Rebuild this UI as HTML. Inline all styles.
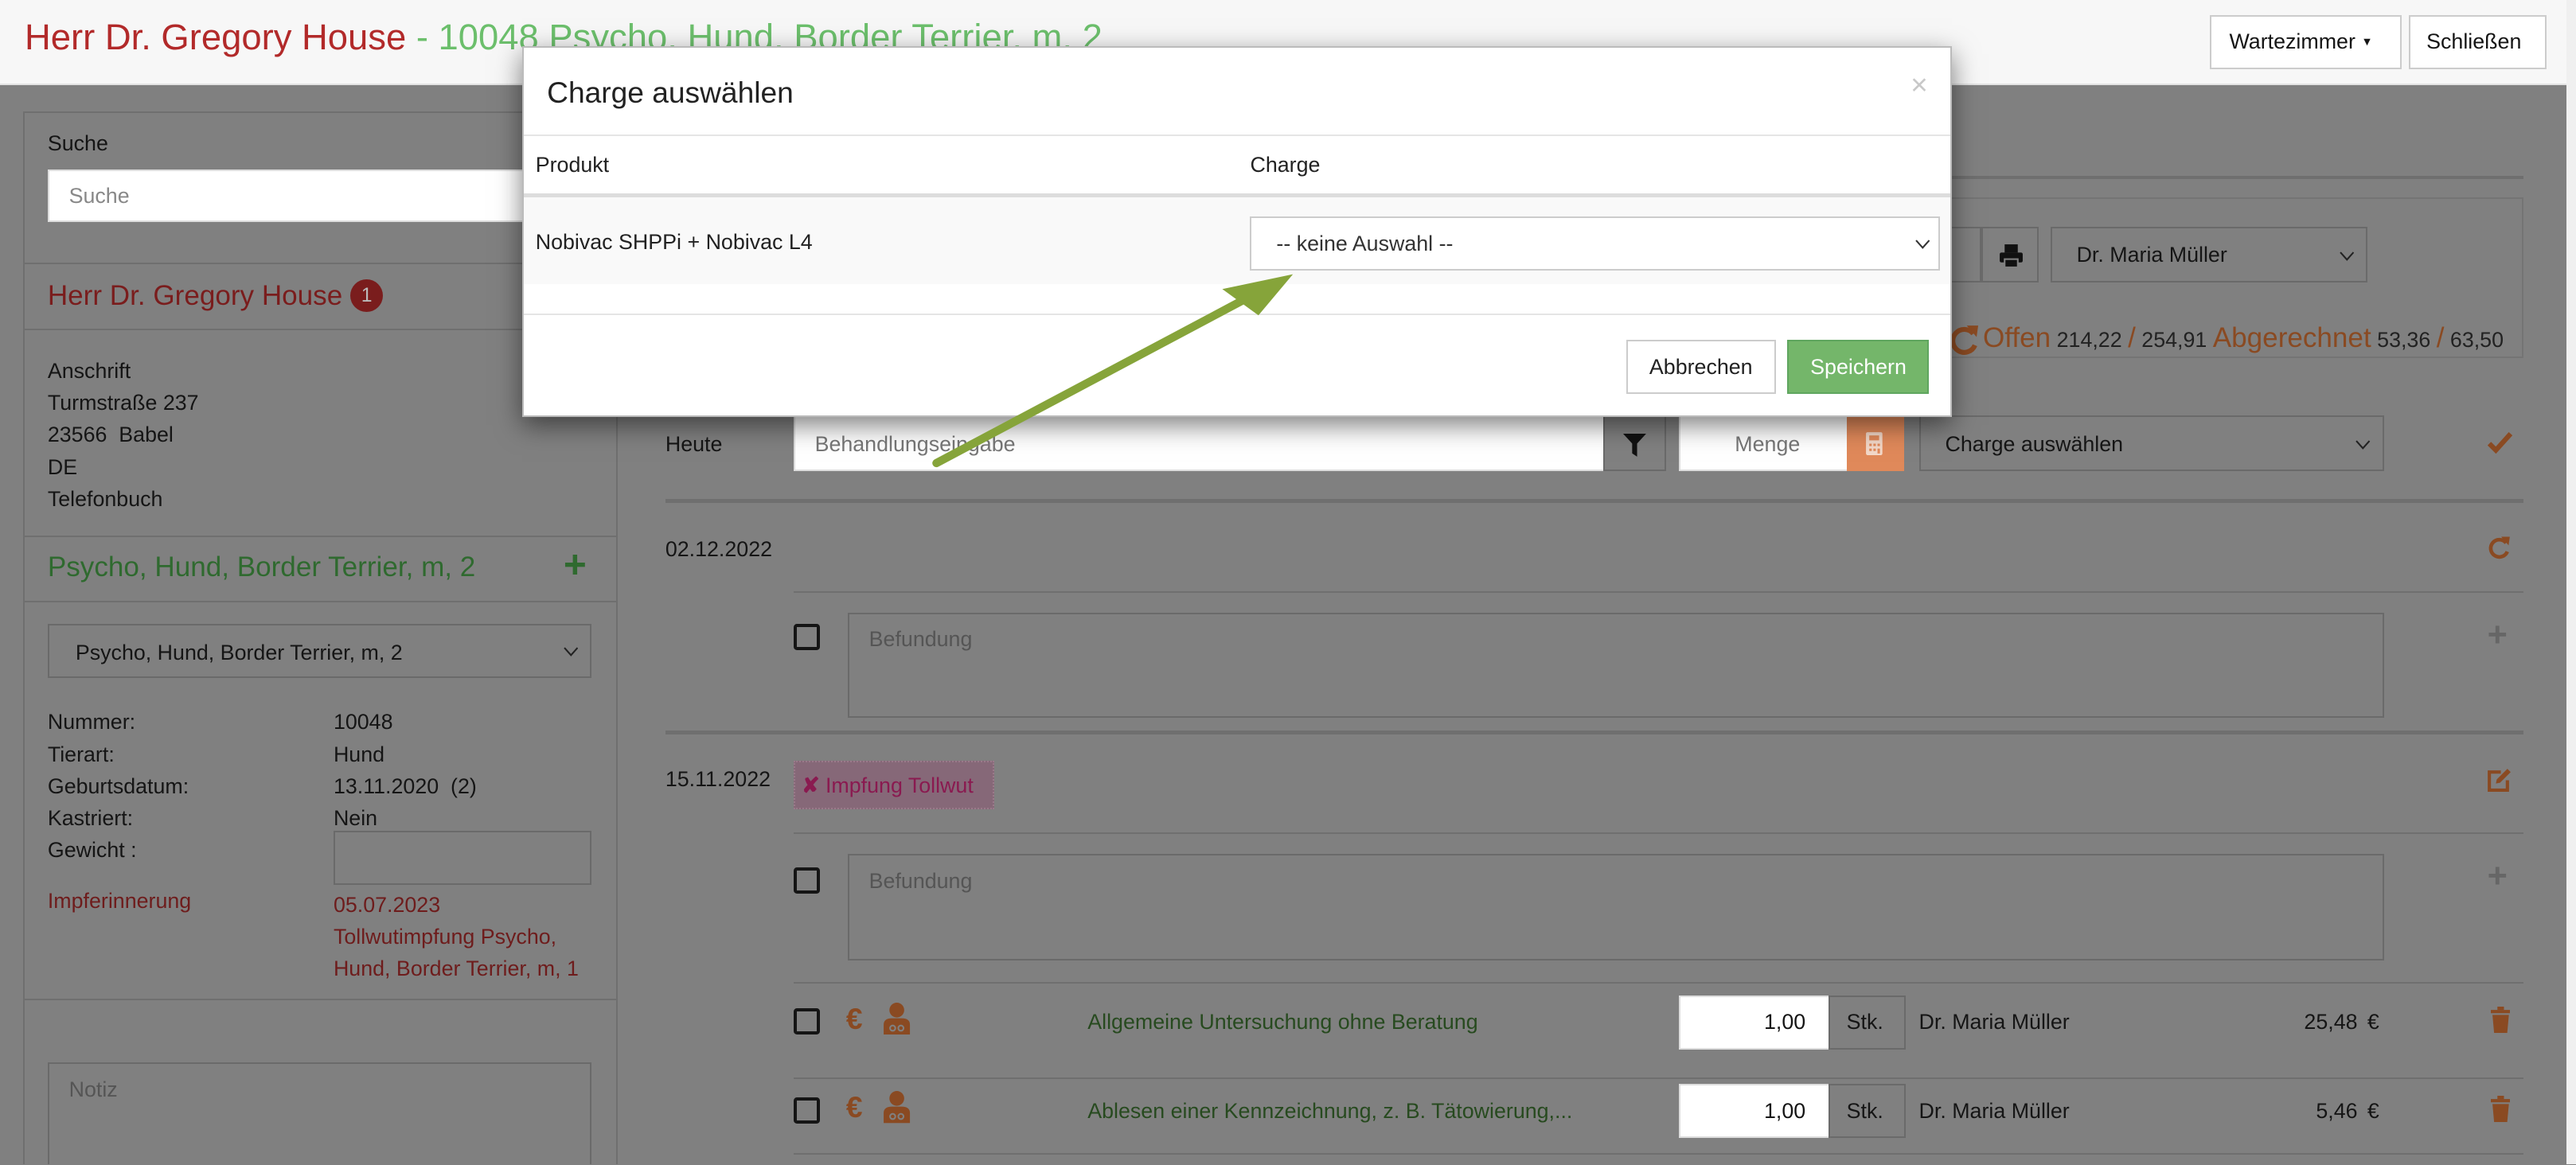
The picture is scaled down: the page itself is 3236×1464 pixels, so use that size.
<!DOCTYPE html>
<html><head><meta charset="utf-8">
<style>
*{box-sizing:border-box;margin:0;padding:0}
html,body{width:3236px;height:1464px;overflow:hidden;background:#808080}
#w{zoom:2.0638;width:1568px;height:709px;position:relative;font-family:"Liberation Sans",sans-serif;font-size:13px;color:#151515;background:#808080;overflow:hidden}
.a{position:absolute}
.hl{position:absolute;height:1px;background:#6f6f6f}
.gin{position:absolute;border:1px solid #6a6a6a;background:#808080}
.win{position:absolute;border:1px solid #bdbdbd;background:#fff}
.cb{position:absolute;width:16px;height:16px;border:2px solid #151515;border-radius:2px}
.or{color:#8a4a22}
.chev{position:absolute}
</style></head><body><div id="w">

<!-- header -->
<div class="a" style="left:0;top:0;width:1562px;height:52px;background:#f7f7f7;border-bottom:1px solid #e2e2e2"></div>
<div class="a" style="left:15px;top:10px;font-size:22px;white-space:nowrap"><span style="color:#b22a2a">Herr Dr. Gregory House</span><span style="color:#6cbf6c"> - 10048 Psycho, Hund, Border Terrier, m, 2</span></div>
<div class="a" style="left:1345px;top:9px;width:117px;height:33px;background:#fff;border:1px solid #ccc;font-size:13px;padding:8px 0 0 11px">Wartezimmer <span style="font-size:7px;vertical-align:2px">▼</span></div>
<div class="a" style="left:1466px;top:9px;width:84px;height:33px;background:#fff;border:1px solid #ccc;font-size:13px;padding:8px 0 0 10px">Schließen</div>
<div class="a" style="left:1562px;top:0;width:6px;height:709px;background:#f0f0f0"></div>

<!-- left panel -->
<div class="a" style="left:14px;top:68px;width:362px;height:660px;border:1px solid #6f6f6f"></div>
<div class="a" style="left:29px;top:80px">Suche</div>
<div class="win" style="left:29px;top:103px;width:300px;height:32px;border-color:#ddd"><span class="a" style="left:12px;top:8px;color:#888">Suche</span></div>
<div class="hl" style="left:14px;top:160px;width:362px"></div>
<div class="a" style="left:29px;top:170px;font-size:17px;color:#7a1d1d">Herr Dr. Gregory House <span style="display:inline-block;width:20px;height:20px;border-radius:10px;background:#7a1d1d;color:#bbb;font-size:12px;text-align:center;line-height:20px;vertical-align:2px">1</span></div>
<div class="hl" style="left:14px;top:200px;width:362px"></div>
<div class="a" style="left:29px;top:216px;line-height:19.5px">Anschrift<br>Turmstraße 237<br>23566&nbsp; Babel<br>DE<br>Telefonbuch</div>
<div class="hl" style="left:14px;top:326px;width:362px"></div>
<div class="a" style="left:29px;top:336px;font-size:17px;color:#2f6a2f">Psycho, Hund, Border Terrier, m, 2</div>
<div class="a" style="left:343px;top:330px;font-size:24px;font-weight:bold;color:#2f6a2f">+</div>
<div class="hl" style="left:14px;top:366px;width:362px"></div>
<div class="gin" style="left:29px;top:380px;width:331px;height:33px"><span class="a" style="left:16px;top:9px">Psycho, Hund, Border Terrier, m, 2</span><svg class="chev" style="left:313px;top:13px" width="9" height="6" viewBox="0 0 9 6"><path d="M.5 .5L4.5 5L8.5 .5" fill="none" stroke="#222" stroke-width="1"/></svg></div>
<div class="a" style="left:29px;top:430px;line-height:19.5px">Nummer:<br>Tierart:<br>Geburtsdatum:<br>Kastriert:<br>Gewicht :</div>
<div class="a" style="left:203px;top:430px;line-height:19.5px">10048<br>Hund<br>13.11.2020&nbsp; (2)<br>Nein</div>
<div class="gin" style="left:203px;top:506px;width:157px;height:33px"></div>
<div class="a" style="left:29px;top:541px;color:#6e1c1c">Impferinnerung</div>
<div class="a" style="left:203px;top:541px;line-height:19.5px;color:#6e1c1c">05.07.2023<br>Tollwutimpfung Psycho,<br>Hund, Border Terrier, m, 1</div>
<div class="hl" style="left:14px;top:608px;width:362px"></div>
<div class="gin" style="left:29px;top:647px;width:331px;height:80px"><span class="a" style="left:12px;top:8px;color:#555">Notiz</span></div>

<!-- right main -->
<div class="hl" style="left:380px;top:107px;width:1156px;height:2px"></div>
<div class="a" style="left:380px;top:120px;width:1156px;height:98px;border:1px solid #747474"></div>
<div class="gin" style="left:1160px;top:138px;width:46px;height:34px"><span class="a" style="left:22px;top:6px;font-size:16px;font-weight:bold">/</span></div>
<div class="gin" style="left:1206px;top:138px;width:35px;height:34px"><svg class="a" style="left:9px;top:9px" width="16" height="16" viewBox="0 0 16 16"><rect x="4" y="1" width="8" height="5" fill="#111"/><rect x="1" y="6" width="14" height="6" rx="1" fill="#111"/><rect x="4" y="10" width="8" height="5" fill="#111" stroke="#808080"/></svg></div>
<div class="gin" style="left:1248px;top:138px;width:193px;height:34px"><span class="a" style="left:15px;top:9px">Dr. Maria Müller</span><svg class="chev" style="left:175px;top:14px" width="9" height="6" viewBox="0 0 9 6"><path d="M.5 .5L4.5 5L8.5 .5" fill="none" stroke="#222" stroke-width="1"/></svg></div>
<svg class="a" style="left:1187px;top:197px" width="18" height="20" viewBox="0 0 18 20"><path d="M14 6A7 7 0 1 0 15 13" fill="none" stroke="#8a4a22" stroke-width="3"/><path d="M10 1L17 1L16 8Z" fill="#8a4a22"/></svg>
<div class="a" style="left:1207px;top:196px;white-space:nowrap;font-size:13px;color:#222"><span style="color:#8a4a22;font-size:17px">Offen</span> 214,22 <span style="color:#8a4a22;font-size:17px">/</span> 254,91 <span style="color:#8a4a22;font-size:17px">Abgerechnet</span> 53,36 <span style="color:#8a4a22;font-size:17px">/</span> 63,50</div>

<div class="a" style="left:405px;top:263px">Heute</div>
<div class="win" style="left:483px;top:253px;width:494px;height:34px;border-color:#ddd"><span class="a" style="left:12px;top:9px;color:#777">Behandlungseingabe</span></div>
<div class="gin" style="left:976px;top:253px;width:38px;height:34px"><svg class="a" style="left:11px;top:10px" width="14" height="14" viewBox="0 0 14 14"><path d="M0 0H14L8.5 6V14L5.5 12V6Z" fill="#111"/></svg></div>
<div class="win" style="left:1022px;top:253px;width:103px;height:34px;border-color:#ddd"><span class="a" style="left:33px;top:9px;color:#777">Menge</span></div>
<div class="a" style="left:1124px;top:253px;width:35px;height:34px;background:#e0895a"><svg class="a" style="left:11px;top:9px" width="12" height="16" viewBox="0 0 12 16"><rect x="1" y="1" width="10" height="14" rx="1" fill="#f3d8c8"/><rect x="3" y="3" width="6" height="3" fill="#e0895a"/><g fill="#e0895a"><rect x="3" y="8" width="1.5" height="1.5"/><rect x="5.5" y="8" width="1.5" height="1.5"/><rect x="8" y="8" width="1.5" height="1.5"/><rect x="3" y="11" width="1.5" height="1.5"/><rect x="5.5" y="11" width="1.5" height="1.5"/><rect x="8" y="11" width="1.5" height="3"/></g></svg></div>
<div class="gin" style="left:1168px;top:253px;width:283px;height:34px"><span class="a" style="left:15px;top:9px">Charge auswählen</span><svg class="chev" style="left:265px;top:14px" width="9" height="6" viewBox="0 0 9 6"><path d="M.5 .5L4.5 5L8.5 .5" fill="none" stroke="#222" stroke-width="1"/></svg></div>
<svg class="a" style="left:1514px;top:263px" width="15" height="13" viewBox="0 0 15 13"><path d="M1 7L5 11L14 1" fill="none" stroke="#8a4a22" stroke-width="3"/></svg>

<div class="hl" style="left:405px;top:304px;width:1131px;height:2px"></div>
<div class="a" style="left:405px;top:327px">02.12.2022</div>
<svg class="a" style="left:1514px;top:326px" width="15" height="15" viewBox="0 0 18 20"><path d="M14 6A7 7 0 1 0 15 13" fill="none" stroke="#8a4a22" stroke-width="3"/><path d="M10 1L17 1L16 8Z" fill="#8a4a22"/></svg>
<div class="hl" style="left:483px;top:360px;width:1053px"></div>
<div class="cb" style="left:483px;top:380px"></div>
<div class="gin" style="left:516px;top:373px;width:935px;height:64px"><span class="a" style="left:12px;top:8px;color:#555">Befundung</span></div>
<div class="a" style="left:1514px;top:375px;font-size:21px;font-weight:bold;color:#666">+</div>
<div class="hl" style="left:405px;top:445px;width:1131px;height:2px"></div>
<div class="a" style="left:405px;top:467px">15.11.2022</div>
<div class="a" style="left:483px;top:463px;width:122px;height:30px;background:#866878;border:1px dotted #9a7a8a;color:#8a1a50;padding:7px 0 0 4px"><b>✘</b> Impfung Tollwut</div>
<svg class="a" style="left:1513px;top:467px" width="16" height="16" viewBox="0 0 16 16"><path d="M9 3H2V14H13V8" fill="none" stroke="#8a4a22" stroke-width="2"/><path d="M6 10L6.5 7.5L13 1L15 3L8.5 9.5Z" fill="#8a4a22"/></svg>
<div class="hl" style="left:483px;top:507px;width:1053px"></div>
<div class="cb" style="left:483px;top:528px"></div>
<div class="gin" style="left:516px;top:520px;width:935px;height:65px"><span class="a" style="left:12px;top:8px;color:#555">Befundung</span></div>
<div class="a" style="left:1514px;top:522px;font-size:21px;font-weight:bold;color:#666">+</div>
<div class="hl" style="left:483px;top:598px;width:1053px"></div>

<!-- service rows -->
<div class="cb" style="left:483px;top:614px"></div>
<div class="a or" style="left:515px;top:610px;font-size:18px;font-weight:bold">€</div>
<svg class="a" style="left:537px;top:610px" width="18" height="20" viewBox="0 0 18 20"><circle cx="9" cy="5" r="4.5" fill="#8a4a22"/><path d="M1 20V14Q1 10 6 10H12Q17 10 17 14V20Z" fill="#8a4a22"/><circle cx="6.5" cy="16" r="1.6" fill="none" stroke="#808080"/><circle cx="11.5" cy="16" r="1.6" fill="none" stroke="#808080"/></svg>
<div class="a" style="left:662px;top:615px;color:#274a1f">Allgemeine Untersuchung ohne Beratung</div>
<div class="win" style="left:1022px;top:606px;width:92px;height:33px;border-color:#ddd"><span class="a" style="right:14px;top:8px">1,00</span></div>
<div class="gin" style="left:1113px;top:606px;width:47px;height:33px"><span class="a" style="left:10px;top:8px">Stk.</span></div>
<div class="a" style="left:1168px;top:615px">Dr. Maria Müller</div>
<div class="a" style="left:1380px;width:55px;text-align:right;top:615px">25,48</div>
<div class="a" style="left:1441px;top:615px">€</div>
<svg class="a" style="left:1516px;top:613px" width="12" height="16" viewBox="0 0 12 16"><rect x="0" y="2" width="12" height="2" fill="#8a4a22"/><rect x="4" y="0" width="4" height="2" fill="#8a4a22"/><path d="M1 5H11L10 16H2Z" fill="#8a4a22"/></svg>
<div class="hl" style="left:483px;top:656px;width:1053px"></div>

<div class="cb" style="left:483px;top:668px"></div>
<div class="a or" style="left:515px;top:664px;font-size:18px;font-weight:bold">€</div>
<svg class="a" style="left:537px;top:664px" width="18" height="20" viewBox="0 0 18 20"><circle cx="9" cy="5" r="4.5" fill="#8a4a22"/><path d="M1 20V14Q1 10 6 10H12Q17 10 17 14V20Z" fill="#8a4a22"/><circle cx="6.5" cy="16" r="1.6" fill="none" stroke="#808080"/><circle cx="11.5" cy="16" r="1.6" fill="none" stroke="#808080"/></svg>
<div class="a" style="left:662px;top:669px;color:#274a1f">Ablesen einer Kennzeichnung, z. B. Tätowierung,...</div>
<div class="win" style="left:1022px;top:660px;width:92px;height:33px;border-color:#ddd"><span class="a" style="right:14px;top:8px">1,00</span></div>
<div class="gin" style="left:1113px;top:660px;width:47px;height:33px"><span class="a" style="left:10px;top:8px">Stk.</span></div>
<div class="a" style="left:1168px;top:669px">Dr. Maria Müller</div>
<div class="a" style="left:1380px;width:55px;text-align:right;top:669px">5,46</div>
<div class="a" style="left:1441px;top:669px">€</div>
<svg class="a" style="left:1516px;top:667px" width="12" height="16" viewBox="0 0 12 16"><rect x="0" y="2" width="12" height="2" fill="#8a4a22"/><rect x="4" y="0" width="4" height="2" fill="#8a4a22"/><path d="M1 5H11L10 16H2Z" fill="#8a4a22"/></svg>
<div class="hl" style="left:483px;top:702px;width:1053px"></div>

<!-- modal -->
<div class="a" style="left:318px;top:28px;width:870px;height:226px;background:#fff;box-shadow:0 5px 15px rgba(0,0,0,.5);border:1px solid #bbb">
 <div class="a" style="left:14px;top:17px;font-size:18px;color:#222">Charge auswählen</div>
 <div class="a" style="left:844px;top:12px;font-size:18px;color:#c8c8c8">×</div>
 <div class="a" style="left:0;top:53px;width:868px;height:1px;background:#e5e5e5"></div>
 <div class="a" style="left:7px;top:64px;color:#222">Produkt</div>
 <div class="a" style="left:442px;top:64px;color:#222">Charge</div>
 <div class="a" style="left:0;top:89px;width:868px;height:2px;background:#ddd"></div>
 <div class="a" style="left:0;top:91px;width:868px;height:53px;background:#f9f9f9"></div>
 <div class="a" style="left:7px;top:111px;color:#222">Nobivac SHPPi + Nobivac L4</div>
 <div class="a" style="left:442px;top:103px;width:420px;height:33px;background:#fff;border:1px solid #ccc"><span class="a" style="left:15px;top:8px;color:#333">-- keine Auswahl --</span><svg class="chev" style="left:404px;top:13px" width="9" height="6" viewBox="0 0 9 6"><path d="M.5 .5L4.5 5L8.5 .5" fill="none" stroke="#333" stroke-width="1"/></svg></div>
 <div class="a" style="left:0;top:162px;width:868px;height:1px;background:#e5e5e5"></div>
 <div class="a" style="left:671px;top:178px;width:91px;height:33px;border:1px solid #ccc;background:#fff;padding:8px 0 0 13px;color:#222">Abbrechen</div>
 <div class="a" style="left:769px;top:178px;width:86px;height:33px;border:1px solid #5fa65f;background:#74b66a;padding:8px 0 0 13px;color:#fff">Speichern</div>
</div>

<!-- arrow -->
<svg class="a" style="left:0;top:0" width="1568" height="709" viewBox="0 0 1568 709"><line x1="570" y1="282" x2="760" y2="181" stroke="#86a43a" stroke-width="5" stroke-linecap="round"/><path d="M787 167L744 176L766 192Z" fill="#86a43a"/></svg>

</div></body></html>
